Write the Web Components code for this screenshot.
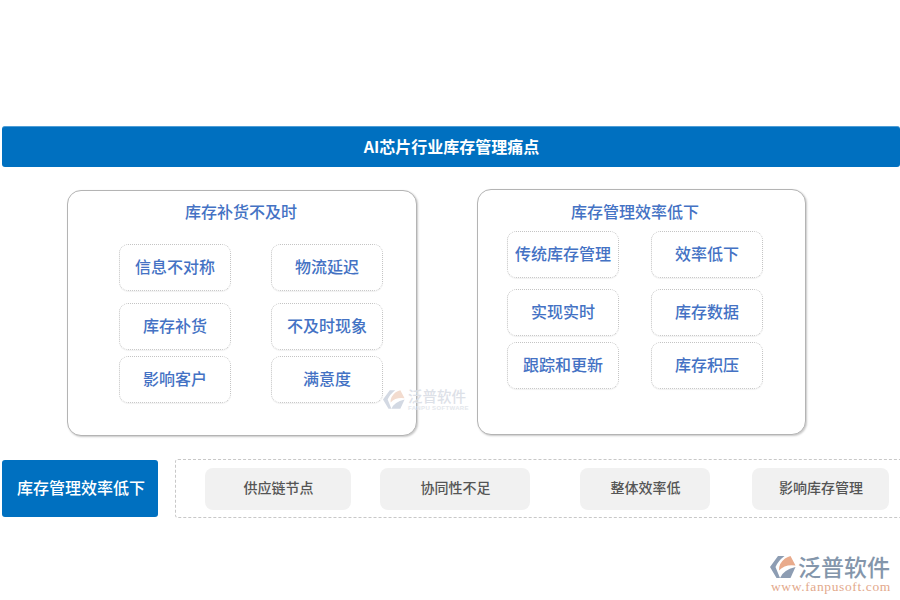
<!DOCTYPE html>
<html lang="zh">
<head>
<meta charset="utf-8">
<title>AI芯片行业库存管理痛点</title>
<style>
  html, body { margin: 0; background: #fff; }
  body { width: 900px; height: 600px; overflow: hidden; position: relative;
    font-family: "Noto Sans CJK SC", "Liberation Sans", sans-serif; }
</style>
</head>
<body>
<pain-page>
  <top-banner>AI芯片行业库存管理痛点</top-banner>
  <panel-row>
    <pain-panel title-text="库存补货不及时" style="margin-left:67px;width:350px;height:246px;margin-top:1px" title-top="9" title-shift="2" grid-top="22" grid-shift="18">
      <chip-row><pain-chip>信息不对称</pain-chip><pain-chip>物流延迟</pain-chip></chip-row>
      <chip-row gap="12"><pain-chip>库存补货</pain-chip><pain-chip>不及时现象</pain-chip></chip-row>
      <chip-row gap="6"><pain-chip>影响客户</pain-chip><pain-chip>满意度</pain-chip></chip-row>
    </pain-panel>
    <pain-panel title-text="库存管理效率低下" style="margin-left:60px;width:329px;height:246px" title-top="10" title-shift="13" grid-top="9" grid-shift="-13">
      <chip-row tight><pain-chip>传统库存管理</pain-chip><pain-chip>效率低下</pain-chip></chip-row>
      <chip-row tight gap="11"><pain-chip>实现实时</pain-chip><pain-chip>库存数据</pain-chip></chip-row>
      <chip-row tight gap="6"><pain-chip>跟踪和更新</pain-chip><pain-chip>库存积压</pain-chip></chip-row>
    </pain-panel>
  </panel-row>
  <bottom-row>
    <side-label>库存管理效率低下</side-label>
    <dash-box>
      <grey-tag style="width:146px">供应链节点</grey-tag>
      <grey-tag style="width:150px;margin-left:29px">协同性不足</grey-tag>
      <grey-tag style="width:130px;margin-left:50px">整体效率低</grey-tag>
      <grey-tag style="width:137px;margin-left:42px">影响库存管理</grey-tag>
    </dash-box>
  </bottom-row>
</pain-page>
<brand-mark class="watermark"></brand-mark>
<brand-mark class="footer" footer></brand-mark>

<script>
const FONT = '"Noto Sans CJK SC", "Liberation Sans", sans-serif';

class PainPage extends HTMLElement {
  constructor() {
    super();
    this.attachShadow({ mode: 'open' });
    this.shadowRoot.innerHTML = `
      <style>
        :host { display: flex; flex-direction: column; padding-top: 126px; }
      </style>
      <slot></slot>`;
  }
}

class TopBanner extends HTMLElement {
  constructor() {
    super();
    this.attachShadow({ mode: 'open' });
    this.shadowRoot.innerHTML = `
      <style>
        :host {
          display: flex; align-items: center; justify-content: center;
          height: 41px; margin-left: 2px; padding: 0 0 3px 1px; box-sizing: border-box;
          background: #0070c0; border-top: 1px solid #4f9ed6; border-radius: 3px;
          color: #fff; font: 700 16px ${FONT};
        }
      </style>
      <slot></slot>`;
  }
}

class PanelRow extends HTMLElement {
  constructor() {
    super();
    this.attachShadow({ mode: 'open' });
    this.shadowRoot.innerHTML = `
      <style>
        :host { display: flex; align-items: flex-start; margin-top: 22px; }
      </style>
      <slot></slot>`;
  }
}

class PainPanel extends HTMLElement {
  constructor() {
    super();
    this.attachShadow({ mode: 'open' });
  }

  connectedCallback() {
    const titleTop = this.getAttribute('title-top') || 9;
    const titleShift = this.getAttribute('title-shift') || 0;
    const gridTop = this.getAttribute('grid-top') || 20;
    const gridShift = +this.getAttribute('grid-shift') || 0;
    const pad = gridShift > 0 ? `padding-left: ${gridShift}px;` : `padding-right: ${-gridShift}px;`;
    this.shadowRoot.innerHTML = `
      <style>
        :host {
          display: block; box-sizing: border-box; flex: none;
          border: 1px solid #b4b4b4; border-radius: 14px; background: #fff;
          box-shadow: 1px 1px 2px rgba(0,0,0,.22);
        }
        .title {
          margin-top: ${titleTop}px; padding-right: ${titleShift}px; text-align: center;
          color: #4472c4; font: 500 16px/22px ${FONT};
        }
        .grid {
          display: flex; flex-direction: column; align-items: center;
          margin-top: ${gridTop}px; ${pad}
        }
      </style>
      <div class="title">${this.getAttribute('title-text')}</div>
      <div class="grid"><slot></slot></div>`;
  }
}

class ChipRow extends HTMLElement {
  constructor() {
    super();
    this.attachShadow({ mode: 'open' });
  }

  connectedCallback() {
    const gap = this.getAttribute('gap') || 0;
    const col = this.hasAttribute('tight') ? 32 : 40;
    this.shadowRoot.innerHTML = `
      <style>
        :host { display: flex; gap: ${col}px; margin-top: ${gap}px; }
      </style>
      <slot></slot>`;
  }
}

class PainChip extends HTMLElement {
  constructor() {
    super();
    this.attachShadow({ mode: 'open' });
    this.shadowRoot.innerHTML = `
      <style>
        :host {
          display: flex; align-items: center; justify-content: center;
          width: 112px; height: 47px; box-sizing: border-box; padding-bottom: 4px;
          border: 1px dotted #c4c4c4; border-radius: 9px;
          box-shadow: 0 1px 1px rgba(0,0,0,.06);
          color: #4472c4; font: 500 16px ${FONT};
        }
      </style>
      <slot></slot>`;
  }
}

class BottomRow extends HTMLElement {
  constructor() {
    super();
    this.attachShadow({ mode: 'open' });
    this.shadowRoot.innerHTML = `
      <style>
        :host { display: flex; align-items: flex-start; margin-top: 23px; margin-left: 2px; }
      </style>
      <slot></slot>`;
  }
}

class SideLabel extends HTMLElement {
  constructor() {
    super();
    this.attachShadow({ mode: 'open' });
    this.shadowRoot.innerHTML = `
      <style>
        :host {
          display: flex; align-items: center; justify-content: center;
          width: 156px; height: 57px; margin-top: 1px; flex: none;
          box-sizing: border-box; padding: 0 0 3px 2px;
          background: #0070c0; border-radius: 3px;
          color: #fff; font: 500 16px ${FONT};
        }
      </style>
      <slot></slot>`;
  }
}

class DashBox extends HTMLElement {
  constructor() {
    super();
    this.attachShadow({ mode: 'open' });
    this.shadowRoot.innerHTML = `
      <style>
        :host {
          display: flex; align-items: center; box-sizing: border-box;
          width: 730px; height: 59px; margin-left: 17px; padding-left: 29px; flex: none;
          border: 1px dashed #c8c8c8; border-radius: 3px;
        }
      </style>
      <slot></slot>`;
  }
}

class GreyTag extends HTMLElement {
  constructor() {
    super();
    this.attachShadow({ mode: 'open' });
    this.shadowRoot.innerHTML = `
      <style>
        :host {
          display: flex; align-items: center; justify-content: center;
          height: 42px; flex: none; box-sizing: border-box; padding: 0 0 3px 1px;
          background: #f1f1f1; border-radius: 8px;
          color: #555; font: 500 14px ${FONT};
        }
      </style>
      <slot></slot>`;
  }
}

// logo, used twice: faint over the panel and full size bottom right
class BrandMark extends HTMLElement {
  constructor() {
    super();
    this.attachShadow({ mode: 'open' });
  }

  connectedCallback() {
    const footer = this.hasAttribute('footer');
    const s = footer
      ? { left: 770, top: 555, w: 26, h: 24, name: 23, nameC: '#8496ab', grey: '#8d9db3', orange: '#e9ab8c' }
      : { left: 383, top: 389, w: 22, h: 21, name: 14.5, nameC: '#dde1e8', grey: '#d3d9e3', orange: '#f3dccf' };
    this.shadowRoot.innerHTML = `
      <style>
        :host {
          display: flex; position: absolute; left: ${s.left}px; top: ${s.top}px;
          flex-direction: column; pointer-events: none;
        }
        .top { display: flex; align-items: flex-start; gap: ${footer ? 2 : 3}px; }
        svg { display: block; flex: none; }
        .name { font: 500 ${s.name}px/1 ${FONT}; color: ${s.nameC}; white-space: nowrap; }
        .sub { font: 700 6px/6px "Liberation Sans", sans-serif; letter-spacing: .35px; color: #e4e7ec; white-space: nowrap; margin-top: 1px; }
        .url { font: 13.5px/14px "Liberation Serif", serif; letter-spacing: .62px; color: #e3a98c; white-space: nowrap; margin: 1px 0 0 1px; }
      </style>
      <div class="top">
        <svg width="${s.w}" height="${s.h}" viewBox="0 0 26 24">
          <path fill="${s.grey}" d="M8 1H14.5Q8 6 5.5 12L10 23H6.5L0 12Z"/>
          <path fill="${s.orange}" d="M15 3.5Q18 1.5 20.5 1L25.5 10.5Q15 9 9 15.5Q8.5 8.5 15 3.5Z"/>
          <path fill="${s.grey}" d="M10 23Q13 15 25.5 12L20.5 23Z"/>
        </svg>
        <div>
          <div class="name">泛普软件</div>
          ${footer ? '' : '<div class="sub">FANPU SOFTWARE</div>'}
        </div>
      </div>
      ${footer ? '<div class="url">www.fanpusoft.com</div>' : ''}`;
  }
}

customElements.define('pain-page', PainPage);
customElements.define('top-banner', TopBanner);
customElements.define('panel-row', PanelRow);
customElements.define('pain-panel', PainPanel);
customElements.define('chip-row', ChipRow);
customElements.define('pain-chip', PainChip);
customElements.define('bottom-row', BottomRow);
customElements.define('side-label', SideLabel);
customElements.define('dash-box', DashBox);
customElements.define('grey-tag', GreyTag);
customElements.define('brand-mark', BrandMark);
</script>
</body>
</html>
